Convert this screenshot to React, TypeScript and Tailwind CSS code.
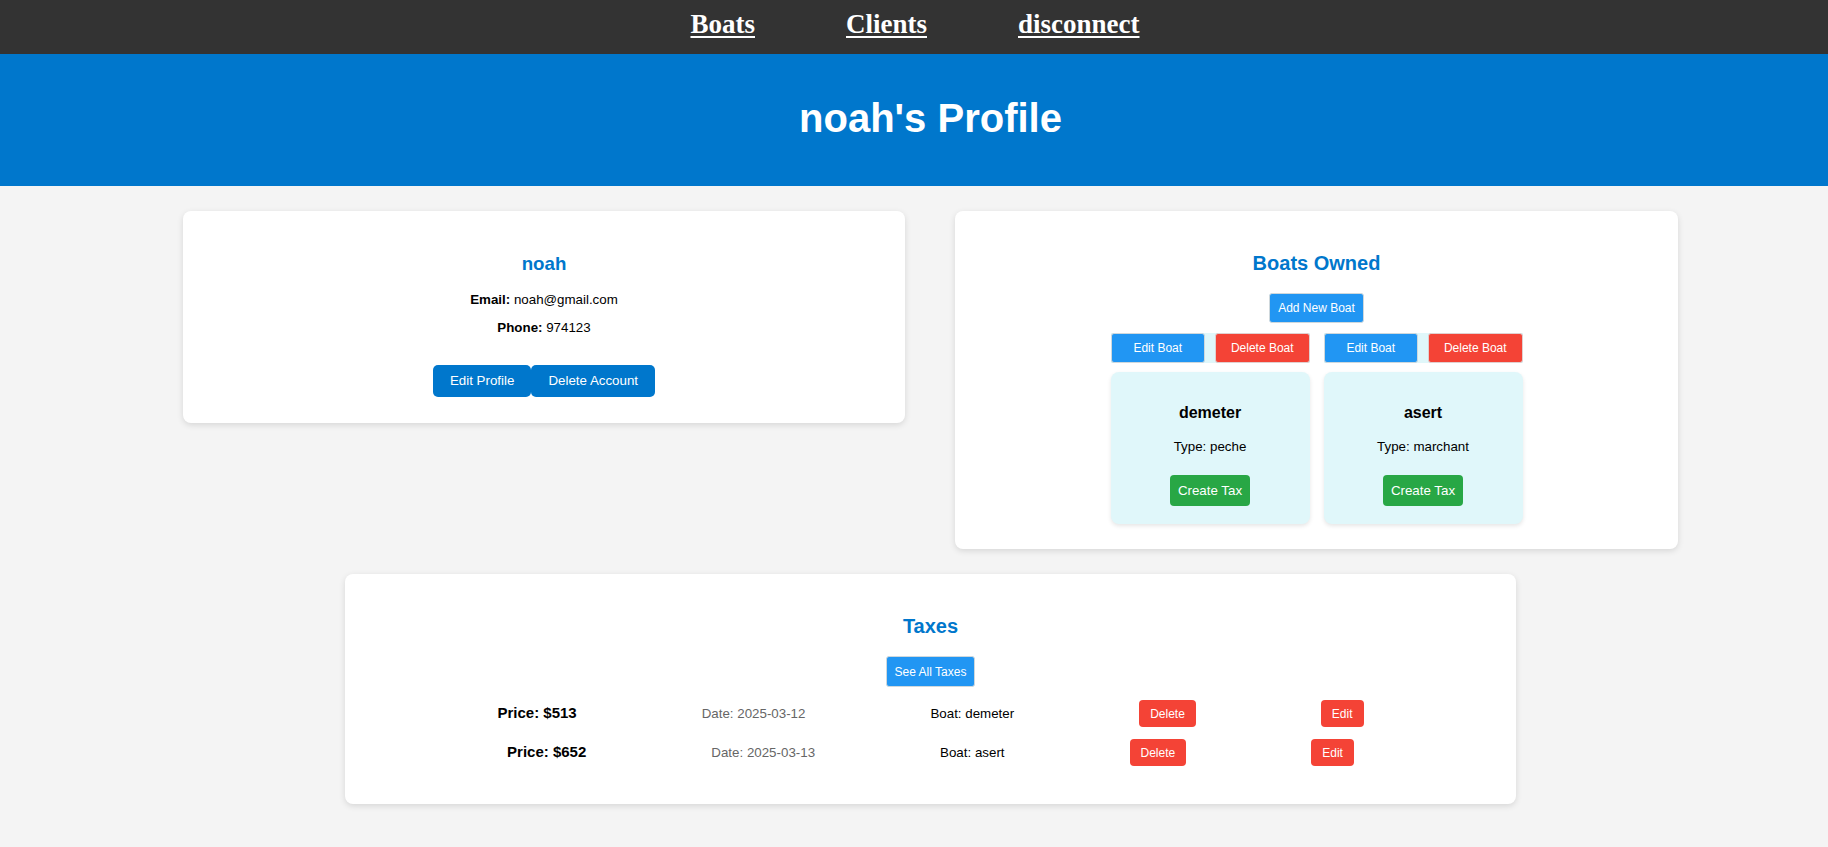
const boats = [
  { name: 'demeter', type: 'peche' },
  { name: 'asert', type: 'marchant' },
];

const taxes = [
  { price: 513, date: '2025-03-12', boat: 'demeter' },
  { price: 652, date: '2025-03-13', boat: 'asert' },
];

export default function App() {
  return (
    <div className="min-h-[847px] bg-[#f4f4f4] font-['Liberation_Sans',Arial,sans-serif] text-black">
      {/* Navbar */}
      <nav className="h-[54px] bg-[#333333] flex justify-center items-start pt-[9px] pl-[2px] gap-[91px]">
        {['Boats', 'Clients', 'disconnect'].map((l) => (
          <a
            key={l}
            href="#"
            className="font-['Liberation_Serif','Times_New_Roman',serif] font-bold text-[27px] leading-[31px] text-white underline decoration-[2px] underline-offset-[3px]"
          >
            {l}
          </a>
        ))}
      </nav>

      {/* Header */}
      <header className="h-[132px] bg-[#0077cc] flex items-center justify-center pl-[33px] pb-[4px]">
        <h1 className="text-[40px] leading-[46px] font-bold text-white">noah's Profile</h1>
      </header>

      <main className="pl-[33px] pt-[25px] pb-[45px]">
        <div className="flex justify-center items-start gap-[50px]">
          {/* Profile card */}
          <section className="w-[722px] bg-white rounded-[8px] shadow-[0_2px_6px_rgba(0,0,0,0.12)] pt-[42px] pb-[26px] flex flex-col items-center">
            <h3 className="text-[18.72px] leading-[22px] font-bold text-[#0077cc]">noah</h3>
            <p className="mt-[17px] text-[13.33px] leading-[15px]">
              <strong>Email:</strong> noah@gmail.com
            </p>
            <p className="mt-[13px] text-[13.33px] leading-[15px]">
              <strong>Phone:</strong> 974123
            </p>
            <div className="mt-[30px] flex">
              <button className="h-[32px] px-[17px] rounded-[5px] bg-[#0077cc] text-white text-[13.33px]">Edit Profile</button>
              <button className="h-[32px] px-[17px] rounded-[5px] bg-[#0077cc] text-white text-[13.33px]">Delete Account</button>
            </div>
          </section>

          {/* Boats card */}
          <section className="w-[723px] bg-white rounded-[8px] shadow-[0_2px_6px_rgba(0,0,0,0.12)] pt-[41px] pb-[25px] flex flex-col items-center">
            <h2 className="text-[20px] leading-[23px] font-bold text-[#0077cc]">Boats Owned</h2>
            <button className="mt-[18px] h-[30px] px-[8px] rounded-[3px] border border-[#cfd8dc] bg-[#2196f3] text-white text-[12px]">
              Add New Boat
            </button>
            <div className="mt-[10px] flex gap-[14px]">
              {boats.map((b) => (
                <div key={b.name} className="w-[199px] flex flex-col">
                  <div className="h-[30px] flex gap-[10px] bg-[#e0f7fa]">
                    <button className="flex-1 rounded-[3px] border border-[#cfd8dc] bg-[#2196f3] text-white text-[12px]">Edit Boat</button>
                    <button className="flex-1 rounded-[3px] border border-[#e0d0d0] bg-[#f44336] text-white text-[12px]">Delete Boat</button>
                  </div>
                  <div className="mt-[9px] h-[152px] bg-[#e0f7fa] rounded-[8px] shadow-[0_2px_4px_rgba(0,0,0,0.1)] pt-[32px] flex flex-col items-center">
                    <h3 className="text-[16px] leading-[18px] font-bold">{b.name}</h3>
                    <p className="mt-[17px] text-[13.33px] leading-[15px]">Type: {b.type}</p>
                    <button className="mt-[21px] h-[31px] px-[8px] rounded-[4px] bg-[#28a745] text-white text-[13.33px]">Create Tax</button>
                  </div>
                </div>
              ))}
            </div>
          </section>
        </div>

        {/* Taxes card */}
        <section className="mx-auto mt-[25px] w-[1171px] bg-white rounded-[8px] shadow-[0_2px_6px_rgba(0,0,0,0.12)] pt-[41px] pb-[38px] flex flex-col items-center">
          <h2 className="text-[20px] leading-[23px] font-bold text-[#0077cc]">Taxes</h2>
          <button className="mt-[18px] h-[31px] px-[8px] rounded-[3px] border border-[#cfd8dc] bg-[#2196f3] text-white text-[12px]">
            See All Taxes
          </button>
          <div className="mt-[13px] flex flex-col gap-[12px]">
            {taxes.map((t) => (
              <div key={t.date} className="h-[27px] flex items-center justify-center gap-[125px]">
                <span className="text-[15px] font-bold">Price: ${t.price}</span>
                <span className="text-[13.33px] text-[#666666]">Date: {t.date}</span>
                <span className="text-[13.33px]">Boat: {t.boat}</span>
                <button className="h-[27px] px-[11px] rounded-[4px] bg-[#f44336] text-white text-[12px]">Delete</button>
                <button className="h-[27px] px-[11px] rounded-[4px] bg-[#f44336] text-white text-[12px]">Edit</button>
              </div>
            ))}
          </div>
        </section>
      </main>
    </div>
  );
}
